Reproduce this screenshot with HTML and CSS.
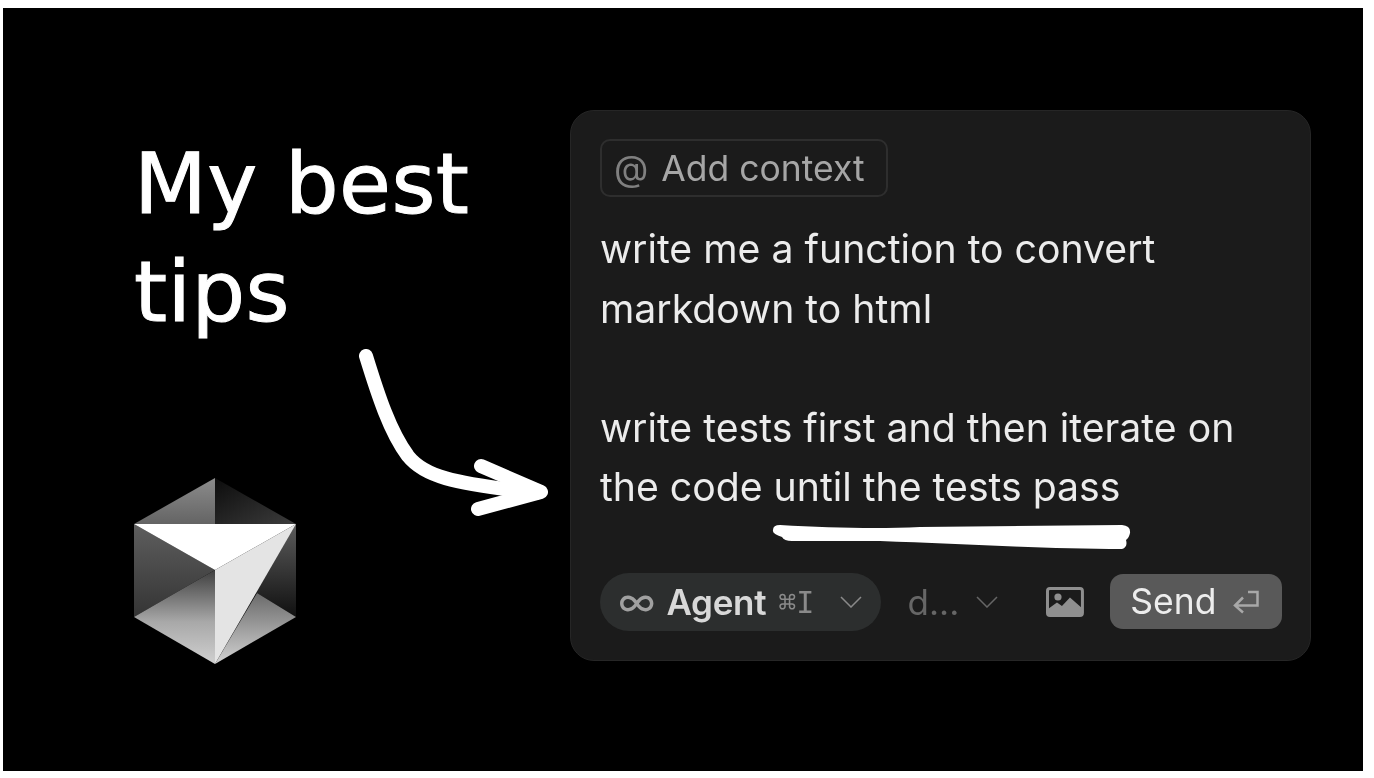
FILE: index.html
```html
<!DOCTYPE html>
<html lang="en">
<head>
    <meta charset="UTF-8">
    <meta name="viewport" content="width=device-width, initial-scale=1.0">
    <title>My best tips</title>
    <link rel="stylesheet" href="styles.css">
</head>
<body>
    <div class="slide">
        <div class="intro">
            <h1 class="intro-title">My best<br>tips</h1>
            <svg class="logo" viewBox="134 478 162 186" width="162" height="186">
                <defs>
                    <linearGradient id="faceTop" x1="0" y1="0" x2="0" y2="1">
                        <stop offset="0" stop-color="#8c8c8c"/>
                        <stop offset="1" stop-color="#646464"/>
                    </linearGradient>
                    <linearGradient id="faceTopDark" x1="0" y1="0" x2="1" y2="1">
                        <stop offset="0" stop-color="#0c0c0c"/>
                        <stop offset="1" stop-color="#3c3c3c"/>
                    </linearGradient>
                    <linearGradient id="faceLeft" x1="0" y1="0" x2="0" y2="1">
                        <stop offset="0" stop-color="#5e5e5e"/>
                        <stop offset="1" stop-color="#343434"/>
                    </linearGradient>
                    <linearGradient id="faceBottom" x1="0" y1="0" x2="0" y2="1">
                        <stop offset="0" stop-color="#3f3f3f"/>
                        <stop offset="0.55" stop-color="#a8a8a8"/>
                        <stop offset="1" stop-color="#d0d0d0"/>
                    </linearGradient>
                    <linearGradient id="faceRight" x1="0" y1="0" x2="0" y2="1">
                        <stop offset="0" stop-color="#5c5c5c"/>
                        <stop offset="1" stop-color="#101010"/>
                    </linearGradient>
                    <linearGradient id="faceBottomRight" x1="0" y1="0" x2="0" y2="1">
                        <stop offset="0" stop-color="#6a6a6a"/>
                        <stop offset="1" stop-color="#d2d2d2"/>
                    </linearGradient>
                </defs>
                <polygon points="215,478 134,524 215,524" fill="url(#faceTop)"/>
                <polygon points="215,478 296,524 215,524" fill="url(#faceTopDark)"/>
                <polygon points="134,524 215,570 134,617" fill="url(#faceLeft)"/>
                <polygon points="296,524 296,617 257,593 240,600" fill="url(#faceRight)"/>
                <polygon points="134,617 215,570 215,664" fill="url(#faceBottom)"/>
                <polygon points="257,593 296,617 215,664" fill="url(#faceBottomRight)"/>
                <polygon points="215,570 296,524 215,664" fill="#e4e4e4"/>
                <polygon points="134,524 296,524 215,570" fill="#fff"/>
            </svg>
        </div>

        <div class="composer">
            <div class="context-chip">
                <span class="context-at">@</span>
                <span>Add context</span>
            </div>
            <div class="prompt">
                <p>write me a function to convert<br>markdown to html</p>
                <p>write tests first and then iterate on<br>the code until the tests pass</p>
            </div>
            <div class="toolbar">
                <div class="mode-pill">
                    <span class="mode-icon">∞</span>
                    <span class="mode-name">Agent</span>
                    <span class="mode-key">⌘I</span>
                    <svg class="chevron" viewBox="0 0 24 12" width="24" height="12"><path d="M2 1l10 10L22 1"/></svg>
                </div>
                <div class="model-select">
                    <span>d...</span>
                    <svg class="chevron" viewBox="0 0 24 12" width="24" height="12"><path d="M2 1l10 10L22 1"/></svg>
                </div>
                <svg class="image-icon" viewBox="0 0 38 30" width="38" height="30">
                    <rect x="1.5" y="1.5" width="35" height="27" rx="2.5" fill="#1b1b1b" stroke="#8f8f8f" stroke-width="3"/>
                    <circle cx="12" cy="10" r="3.6" fill="#8f8f8f"/>
                    <path d="M2 27V22L11 15.5 16 19 24 10.5 36 21V27Z" fill="#8f8f8f"/>
                </svg>
                <div class="send-button">
                    <span>Send</span>
                    <svg class="return-icon" viewBox="0 0 28 24" width="28" height="24"><path d="M15 2h9.500V15.500H2M10 7.500L2 15.500l8 7"/></svg>
                </div>
            </div>
        </div>

        <!-- hand drawn marks over the slide -->
        <svg class="marks" viewBox="3 8 1360 763" width="1360" height="763">
            <path class="arrow" d="M366 356C378 395 390 432 408 456C424 476 450 483 536 493"/>
            <path class="arrow" d="M481 466L541 492L478 509"/>
            <path class="underline" d="M780 525C830 528 880 529 920 527L1122 525Q1131 526 1130 533Q1129 538 1126 540Q1128 547 1122 549C1050 549 960 544 880 541L792 541Q784 541 782 537Q772 534 773 530Q773 525 780 525Z"/>
        </svg>
    </div>
</body>
</html>
```

FILE: styles.css
```css
body {
    margin: 0;
    background-color: #fff;
    font-family: Inter, "Liberation Sans", sans-serif;
}

.slide {
    position: relative;
    display: flex;
    justify-content: space-between;
    width: 1360px;
    height: 763px;
    margin: 8px 0 0 3px;
    padding: 102px 52px 110px 131px;
    box-sizing: border-box;
    background-color: #000;
}

/* the source is a soft, rescaled image */
.slide > * {
    filter: blur(0.4px);
}

.intro {
    display: flex;
    flex-direction: column;
}

.intro-title {
    margin: 20px 0 0;
    font-family: "DejaVu Sans", cursive;
    font-size: 84.5px;
    font-weight: 400;
    line-height: 108px;
    letter-spacing: 0.4px;
    color: #fff;
    -webkit-text-stroke: 1px #fff;
}

.logo {
    display: block;
    flex: none;
    margin-top: 132px;
}

.composer {
    display: flex;
    flex-direction: column;
    width: 741px;
    height: 551px;
    padding: 28px 28px 29px 29px;
    box-sizing: border-box;
    background-color: #1b1b1b;
    border: 1px solid #262626;
    border-radius: 24px;
}

.context-chip {
    display: flex;
    flex: none;
    align-items: center;
    gap: 13px;
    align-self: flex-start;
    height: 58px;
    padding: 0 21px 0 12px;
    box-sizing: border-box;
    border: 2px solid #2e2e2e;
    border-radius: 10px;
    font-size: 35.5px;
    color: #a6a6a6;
}

.context-at {
    color: #808080;
}

.prompt {
    flex: 1;
    min-height: 0;
    margin-top: 22px;
    font-size: 39.2px;
    line-height: 59.500px;
    color: #ececec;
}

.prompt p {
    margin: 0 0 59.500px;
}

.prompt p:last-child {
    margin-bottom: 0;
}

.toolbar {
    display: flex;
    flex: none;
    align-items: center;
}

.mode-pill {
    display: flex;
    align-items: center;
    width: 281px;
    height: 58px;
    padding: 0 18px;
    box-sizing: border-box;
    background-color: #2c2e2e;
    border-radius: 29px;
    color: #d8d8d8;
}

.mode-icon {
    font-size: 40px;
    line-height: 1;
    color: #a0a0a0;
}

.mode-name {
    margin-left: 11px;
    font-size: 35px;
    font-weight: 600;
    letter-spacing: -0.3px;
}

.mode-key {
    margin-left: 12px;
    font-family: "DejaVu Sans Mono", monospace;
    font-size: 30px;
    color: #8a8a8a;
}

.chevron {
    margin-left: auto;
    fill: none;
    stroke: #8a8a8a;
    stroke-width: 1.500;
}

.model-select {
    display: flex;
    align-items: center;
    width: 92px;
    margin-left: 27px;
    font-size: 35px;
    color: #666;
}

.model-select .chevron {
    stroke: #666;
}

.image-icon {
    margin-left: 47px;
}

.send-button {
    display: flex;
    align-items: center;
    gap: 17px;
    width: 172px;
    height: 55px;
    margin-left: 26px;
    margin-bottom: 1px;
    padding-left: 20px;
    box-sizing: border-box;
    background-color: #595959;
    border-radius: 13px;
    font-size: 35.5px;
    color: #ededed;
}

.return-icon {
    fill: none;
    stroke: #a8a8a8;
    stroke-width: 2.500;
}

.marks {
    position: absolute;
    left: 0;
    top: 0;
    pointer-events: none;
}

.arrow {
    fill: none;
    stroke: #fff;
    stroke-width: 14;
    stroke-linecap: round;
    stroke-linejoin: round;
}

.underline {
    fill: #fff;
}
```
